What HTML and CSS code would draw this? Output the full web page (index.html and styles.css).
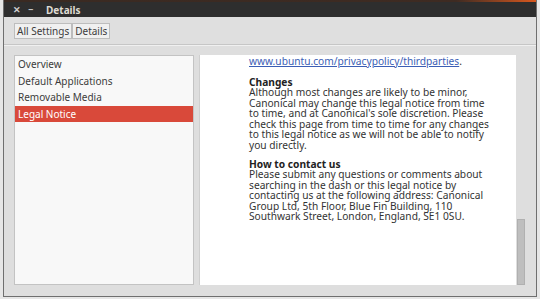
FILE: index.html
```html
<!DOCTYPE html>
<html>
<head>
  <title>Details</title>
  <link rel="stylesheet" href="styles.css">
</head>
<body>
  <div class="window">
    <div class="topline"></div>
    <div class="titlebar">
      <span class="win-btn">&#x2715;</span>
      <span class="win-btn">&#x2212;</span>
      <span class="title">Details</span>
    </div>

    <div class="toolbar">
      <button class="crumb">All Settings</button><button class="crumb">Details</button>
    </div>

    <div class="content">
      <ul class="sections">
        <li>Overview</li>
        <li>Default Applications</li>
        <li>Removable Media</li>
        <li class="selected">Legal Notice</li>
      </ul>

      <div class="notice">
        <div class="notice-text">
          <p class="first"><span class="cut-line">party websites, please see</span><a href="#">www.ubuntu.com/privacypolicy/thirdparties</a>.</p>

          <h3>Changes</h3>
          <p>Although most changes are likely to be minor,<br>Canonical may change this legal notice from time<br>to time, and at Canonical's sole discretion. Please<br>check this page from time to time for any changes<br>to this legal notice as we will not be able to notify<br>you directly.</p>

          <h3>How to contact us</h3>
          <p>Please submit any questions or comments about<br>searching in the dash or this legal notice by<br>contacting us at the following address: Canonical<br>Group Ltd, 5th Floor, Blue Fin Building, 110<br>Southwark Street, London, England, SE1 0SU.</p>
        </div>
      </div>

      <div class="scrollbar">
        <div class="thumb"></div>
      </div>
    </div>
  </div>
</body>
</html>
```

FILE: styles.css
```css
body {
  margin: 0;
  background-color: #e6e6e6;
  font-family: "Noto Sans", "Open Sans", sans-serif;
}

.window {
  margin: 0 3px 0 3px;
  height: 296px;
  border: 1px solid #6f6f6f;
  border-top: none;
  background-color: #dedede;
  display: flex;
  flex-direction: column;
}

.topline {
  height: 2px;
  background: linear-gradient(to right, #3a2a22 0%, #3e2b22 85%, #d9581e 100%);
}

.titlebar {
  height: 15px;
  background-color: #2e2e2e;
  color: #dfdbd2;
  display: flex;
  align-items: center;
  font-size: 10px;
  padding-left: 9px;
}

.win-btn {
  width: 15px;
  font-size: 9px;
  font-weight: bold;
  color: #cfcfcf;
}

.title {
  margin-left: 3px;
  font-weight: bold;
}

.toolbar {
  height: 27px;
  display: flex;
  align-items: center;
  padding-left: 10px;
  border-bottom: 1px solid #c6c6c6;
  background-color: #dfdfdf;
}

.crumb {
  font-family: inherit;
  font-size: 10px;
  color: #3c3c3c;
  background-color: #f0f0f0;
  border: 1px solid #bdbdbd;
  height: 16px;
  padding: 0 2px;
  margin: 0;
}

.content {
  flex: 1;
  display: flex;
  padding: 9px 9px 11px 10px;
  border-top: 1px solid #f0f0f0;
}

.sections {
  list-style: none;
  margin: 0;
  padding: 0;
  width: 178px;
  background-color: #f8f8f8;
  border: 1px solid #c3c3c3;
  font-size: 10px;
  color: #3c3c3c;
}

.sections li {
  height: 16.5px;
  line-height: 16px;
  padding-left: 3px;
}

.sections li.selected {
  background-color: #d9493a;
  color: #fff;
}

.notice {
  margin-left: 5px;
  flex: 1;
  background-color: #fff;
  border-left: 1px solid #cfcfcf;
  overflow: hidden;
}

.notice-text {
  margin: -8px 0 0 49px;
  font-size: 10.2px;
  line-height: 10.5px;
  color: #333;
}

.notice-text p {
  margin: 0 0 8.5px 0;
}

.notice-text p.first {
  margin-bottom: 10px;
}

/* line scrolled above the view, only its descenders show */
.cut-line {
  display: block;
  line-height: 3px;
  margin-bottom: 6px;
}

.notice-text h3 {
  margin: 0;
  font-size: 10.2px;
  font-weight: bold;
  color: #222;
}

.notice-text a {
  color: #3b5eb5;
}

.scrollbar {
  width: 10px;
  display: flex;
  flex-direction: column;
  justify-content: flex-end;
  padding-left: 1px;
}

.thumb {
  height: 66px;
  width: 8px;
  background-color: #bebebe;
  border: 1px solid #b0b0b0;
  box-sizing: border-box;
}
```
